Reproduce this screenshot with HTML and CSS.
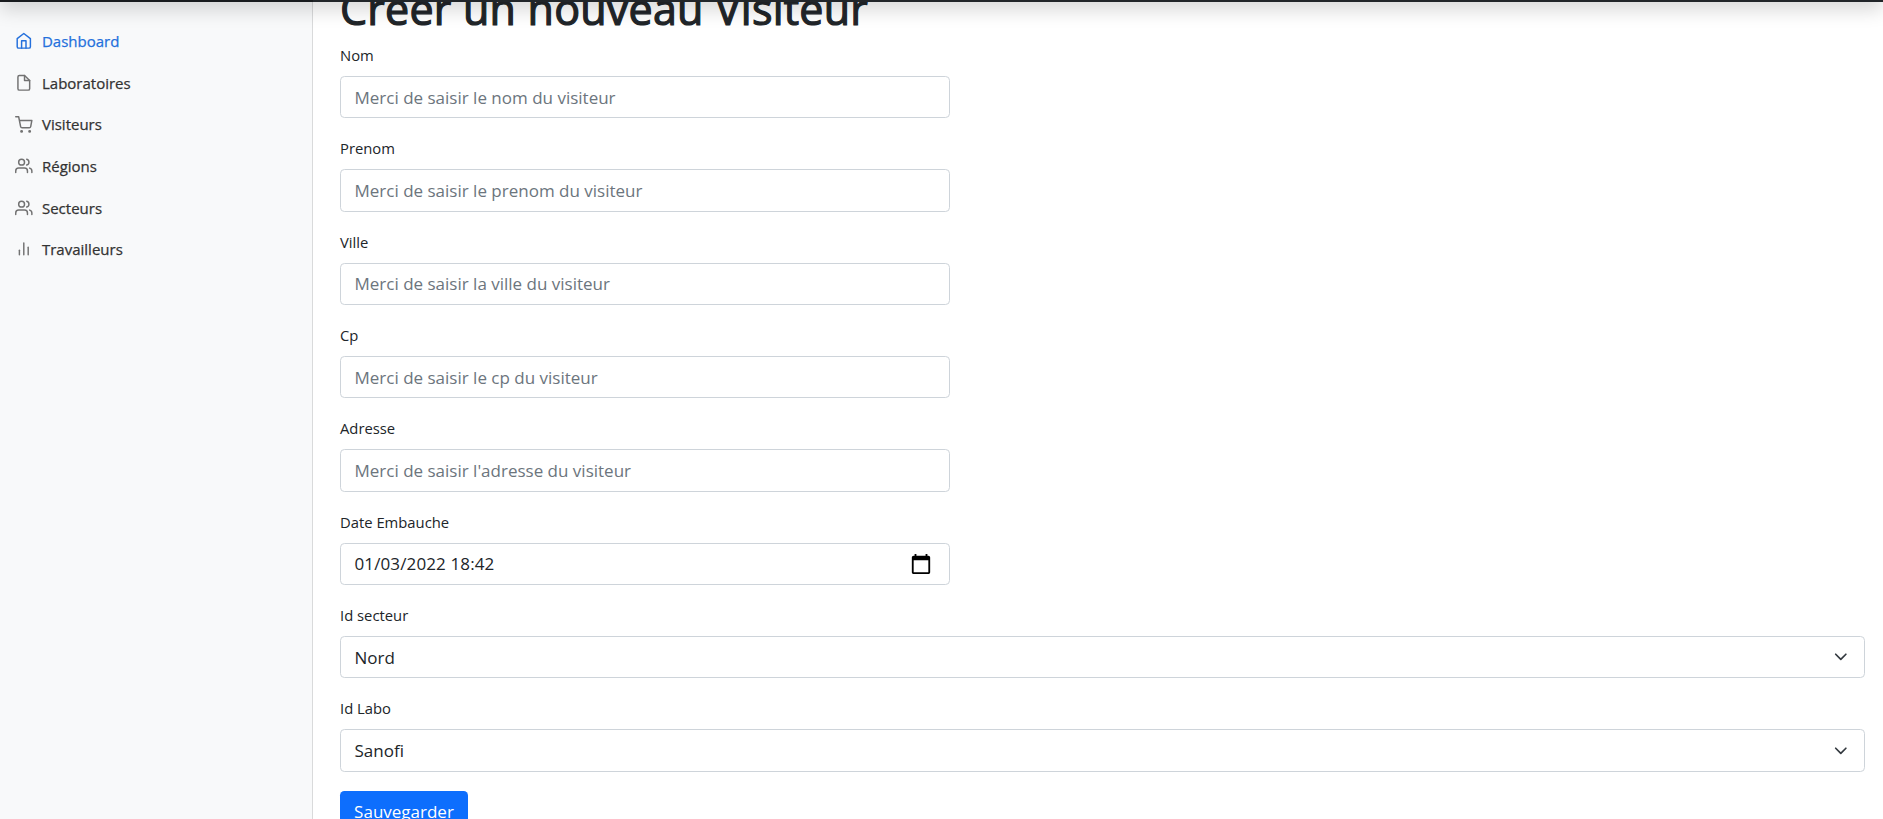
FILE: index.html
```html
<!DOCTYPE html>
<html lang="fr">
<head>
<meta charset="utf-8">
<title>Visiteurs</title>
<link rel="stylesheet" href="styles.css">
</head>
<body>
<header class="navbar"><div class="navbar-brand"></div></header>
<div class="layout">
  <nav class="sidebar">
    <a class="nav-link active"><svg class="feather" viewBox="0 0 24 24"><path d="M3 9l9-7 9 7v11a2 2 0 0 1-2 2H5a2 2 0 0 1-2-2z"/><polyline points="9 22 9 12 15 12 15 22"/></svg><span>Dashboard</span></a>
    <a class="nav-link"><svg class="feather" viewBox="0 0 24 24"><path d="M13 2H6a2 2 0 0 0-2 2v16a2 2 0 0 0 2 2h12a2 2 0 0 0 2-2V9z"/><polyline points="13 2 13 9 20 9"/></svg><span>Laboratoires</span></a>
    <a class="nav-link"><svg class="feather" viewBox="0 0 24 24"><circle cx="9" cy="21" r="1"/><circle cx="20" cy="21" r="1"/><path d="M1 1h4l2.68 13.39a2 2 0 0 0 2 1.61h9.72a2 2 0 0 0 2-1.61L23 6H6"/></svg><span>Visiteurs</span></a>
    <a class="nav-link"><svg class="feather" viewBox="0 0 24 24"><path d="M17 21v-2a4 4 0 0 0-4-4H5a4 4 0 0 0-4 4v2"/><circle cx="9" cy="7" r="4"/><path d="M23 21v-2a4 4 0 0 0-3-3.87"/><path d="M16 3.13a4 4 0 0 1 0 7.75"/></svg><span>Régions</span></a>
    <a class="nav-link"><svg class="feather" viewBox="0 0 24 24"><path d="M17 21v-2a4 4 0 0 0-4-4H5a4 4 0 0 0-4 4v2"/><circle cx="9" cy="7" r="4"/><path d="M23 21v-2a4 4 0 0 0-3-3.87"/><path d="M16 3.13a4 4 0 0 1 0 7.75"/></svg><span>Secteurs</span></a>
    <a class="nav-link"><svg class="feather" viewBox="0 0 24 24"><line x1="18" y1="20" x2="18" y2="10"/><line x1="12" y1="20" x2="12" y2="4"/><line x1="6" y1="20" x2="6" y2="14"/></svg><span>Travailleurs</span></a>
  </nav>
  <main class="content">
    <h1 class="title">Créer un nouveau Visiteur</h1>
    <form class="form">
      <div class="field"><label class="label">Nom</label><input class="control" placeholder="Merci de saisir le nom du visiteur"></div>
      <div class="field"><label class="label">Prenom</label><input class="control" placeholder="Merci de saisir le prenom du visiteur"></div>
      <div class="field"><label class="label">Ville</label><input class="control" placeholder="Merci de saisir la ville du visiteur"></div>
      <div class="field"><label class="label">Cp</label><input class="control" placeholder="Merci de saisir le cp du visiteur"></div>
      <div class="field"><label class="label">Adresse</label><input class="control" placeholder="Merci de saisir l'adresse du visiteur"></div>
      <div class="field"><label class="label">Date Embauche</label><div class="control date"><span class="date-value">01/03/2022 18:42</span><svg class="calendar" viewBox="0 0 24 24"><path d="M20 3h-1V1h-2v2H7V1H5v2H4c-1.100 0-2 .9-2 2v16c0 1.100.9 2 2 2h16c1.100 0 2-.9 2-2V5c0-1.100-.9-2-2-2zm0 18H4V8h16v13z"/></svg></div></div>
      <div class="field wide"><label class="label">Id secteur</label><div class="control select"><span>Nord</span><svg class="chevron" viewBox="0 0 16 16"><path d="M2 5l6 6 6-6"/></svg></div></div>
      <div class="field wide"><label class="label">Id Labo</label><div class="control select"><span>Sanofi</span><svg class="chevron" viewBox="0 0 16 16"><path d="M2 5l6 6 6-6"/></svg></div></div>
      <button class="button" type="button">Sauvegarder</button>
    </form>
  </main>
</div>
</body>
</html>
```
FILE: styles.css
```css
* { box-sizing: border-box; }
body {
  margin: 0;
  height: 819px;
  overflow: hidden;
  background: #fff;
  color: #212529;
  font-family: "Open Sans", "Noto Sans", sans-serif;
  font-size: 17.6px;
}
.navbar {
  position: fixed;
  top: -51px;
  left: 0;
  right: 0;
  z-index: 10;
  height: 53px;
  background: #212529;
  box-shadow: 0 8.8px 17.6px rgba(0, 0, 0, .15);
}
.navbar-brand {
  width: 313px;
  height: 100%;
  background: rgba(0, 0, 0, .25);
}
.layout { display: flex; height: 819px; }
.sidebar {
  flex: none;
  width: 313px;
  padding-top: 20.4px;
  background: #f8f9fa;
  box-shadow: inset -1px 0 0 rgba(0, 0, 0, .12);
}
.nav-link {
  display: flex;
  align-items: center;
  gap: 9.2px;
  height: 41.6px;
  padding-left: 15.2px;
  color: #333;
  font-size: 15px;
  -webkit-text-stroke: .25px currentColor;
}
.nav-link.active { color: #2470dc; }
.feather {
  width: 17.6px;
  height: 17.6px;
  fill: none;
  stroke: #727272;
  stroke-width: 2;
  stroke-linecap: round;
  stroke-linejoin: round;
}
.active .feather { stroke: currentColor; }
.content { flex: 1; padding: 0 18px 0 27px; }
.title {
  height: 53px;
  margin: -18px 0 9px;
  font-size: 43px;
  font-weight: 400;
  letter-spacing: .22px;
  line-height: 53px;
  white-space: nowrap;
  -webkit-text-stroke: 1.2px currentColor;
}
.form { display: flex; flex-direction: column; align-items: flex-start; }
.field { width: 610px; height: 93.35px; }
.field.wide { width: 100%; }
.label {
  display: block;
  height: 32px;
  font-size: 14.8px;
  line-height: 23px;
}
.control {
  display: flex;
  align-items: center;
  width: 100%;
  height: 42.4px;
  padding: 0 13.5px;
  border: 1px solid #ced4da;
  border-radius: 4.4px;
  background: #fff;
  color: #212529;
  font: inherit;
  font-size: 17px;
}
.control::placeholder { color: #6c757d; opacity: 1; }
.date, .select { justify-content: space-between; }
.date-value { letter-spacing: .12px; }
.calendar { width: 22px; height: 22px; margin-right: 3.5px; }
.chevron {
  width: 13.6px;
  height: 13.6px;
  margin-right: 2.5px;
  fill: none;
  stroke: #343a40;
  stroke-width: 2;
  stroke-linecap: round;
  stroke-linejoin: round;
}
.button {
  width: 128px;
  height: 42px;
  padding: 0;
  border: 0;
  border-radius: 4.4px;
  background: #0d6efd;
  color: #fff;
  font: inherit;
  font-size: 17px;
}
```
